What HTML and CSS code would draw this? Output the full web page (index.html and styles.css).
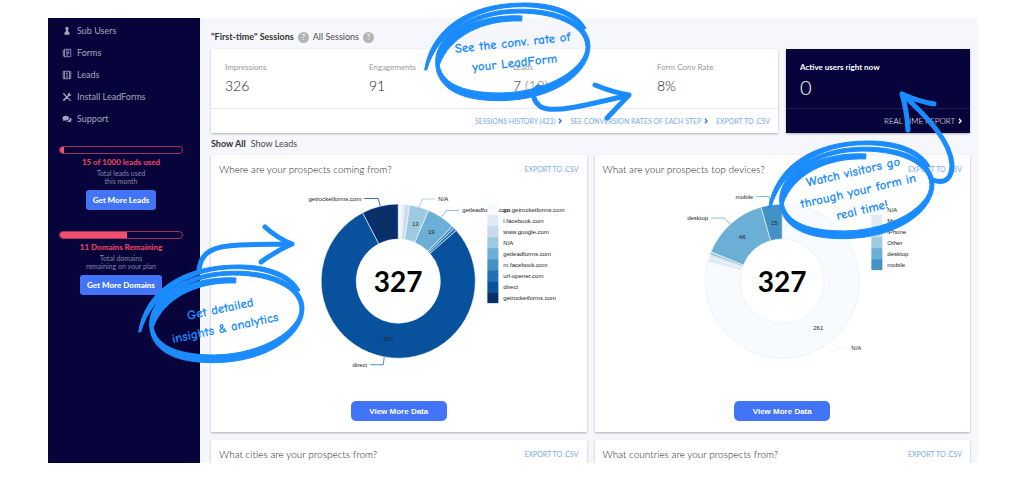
FILE: index.html
```html
<!DOCTYPE html>
<html lang="en">
<head>
<meta charset="utf-8">
<title>LeadForms dashboard</title>
<link rel="stylesheet" href="styles.css">
</head>
<body>
<div class="page">
  <div class="app">
    <aside class="sidebar">
      <nav class="menu">
        <a href="#"><svg viewBox="0 0 12 12"><circle cx="6" cy="3" r="2"/><path d="M4.800 4.500h2.400v1.700c1.500.5 2 1.600 2 4.300H2.800c0-2.700.5-3.800 2-4.300z"/></svg>Sub Users</a>
        <a href="#"><svg class="line" viewBox="0 0 12 12"><path d="M3 1.500h7.500v9H3zM3 3H1.500v6.500L3 10.500M4.700 3.500h4M4.700 5.200h4M4.700 6.900h4M4.700 8.600h2.500"/></svg>Forms</a>
        <a href="#"><svg class="line" viewBox="0 0 12 12"><path d="M1.500 1.500h7.500v9H1.500zM3 1.500v9M10.500 2v8M9 1.500l1.500.5M9 10.500l1.500-.5M4.500 8.500h3"/><circle cx="6" cy="4" r=".7"/><path d="M6 5v3"/></svg>Leads</a>
        <a href="#"><svg viewBox="0 0 12 12"><path d="M1 2.200 2.200 1l2.500 2.500L6 6l3.200 2.500 1.800 1.600-1 1-1.700-1.800L5.500 6.500 3.500 4.700zM8 1.200c1-.5 1.900-.3 1.900-.3L8.700 2.300l1 1 1.400-1.200c.3 2-1.100 3.100-2.600 2.800L3 10.500c-1 1-2.400-.4-1.500-1.500L7.100 3.500C6.900 2.500 7.300 1.600 8 1.200z"/></svg>Install LeadForms</a>
        <a href="#"><svg viewBox="0 0 12 12"><path d="M4.500 2C2.200 2 .5 3.300.5 5c0 1 .5 1.700 1.300 2.200L1 8.700l2.300-.9c3 .4 5.200-1 5.200-2.900C8.500 3.200 6.800 2 4.500 2zM9.300 4.500c.4 2.200-1.500 4-4 4.200 1 .8 2.400 1 3.700.7l2 .8-.6-1.400c1.800-1.400 1.300-3.800-1.100-4.300z"/></svg>Support</a>
      </nav>
      <section class="quota">
        <div class="bar"><span class="fill" style="width:3%"></span></div>
        <strong>15 of 1000 leads used</strong>
        <p>Total leads used<br>this month</p>
        <button type="button">Get More Leads</button>
      </section>
      <section class="quota">
        <div class="bar"><span class="fill" style="width:55%"></span></div>
        <strong>11 Domains Remaining</strong>
        <p>Total domains<br>remaining on your plan</p>
        <button type="button">Get More Domains</button>
      </section>
    </aside>
    <main class="main">
      <div class="tabs sessions">
        <a class="current" href="#">"First-time" Sessions</a><button class="help" type="button">?</button>
        <a href="#">All Sessions</a><button class="help" type="button">?</button>
      </div>
      <div class="summary">
        <section class="card metrics">
          <dl class="figures">
            <div><dt>Impressions</dt><dd>326</dd></div>
            <div><dt>Engagements</dt><dd>91</dd></div>
            <div><dt>Leads</dt><dd>7 <span class="muted">(18)</span></dd></div>
            <div><dt>Form Conv Rate</dt><dd>8%</dd></div>
          </dl>
          <div class="actions">
            <a href="#">SESSIONS HISTORY (423) <svg class="chev" viewBox="0 0 4 6"><path d="M1 .8 3 3 1 5.200"/></svg></a>
            <a href="#">SEE CONVERSION RATES OF EACH STEP <svg class="chev" viewBox="0 0 4 6"><path d="M1 .8 3 3 1 5.200"/></svg></a>
            <a href="#">EXPORT TO .CSV</a>
          </div>
        </section>
        <section class="card live">
          <div class="now"><h2>Active users right now</h2><p>0</p></div>
          <div class="actions"><a href="#">REAL TIME REPORT <svg class="chev" viewBox="0 0 4 6"><path d="M1 .8 3 3 1 5.200"/></svg></a></div>
        </section>
      </div>
      <div class="tabs filter"><a class="current" href="#">Show All</a><a href="#">Show Leads</a></div>
      <div class="charts">
        <section class="card chart">
          <header><h2>Where are your prospects coming from?</h2><a href="#">EXPORT TO .CSV</a></header>
          <svg class="plot" id="sources" viewBox="211 183 375 210"></svg>
          <button class="more" type="button">View More Data</button>
        </section>
        <section class="card chart">
          <header><h2>What are your prospects top devices?</h2><a href="#">EXPORT TO .CSV</a></header>
          <svg class="plot" id="devices" viewBox="594 183 375 210"></svg>
          <button class="more" type="button">View More Data</button>
        </section>
        <section class="card chart"><header><h2>What cities are your prospects from?</h2><a href="#">EXPORT TO .CSV</a></header></section>
        <section class="card chart"><header><h2>What countries are your prospects from?</h2><a href="#">EXPORT TO .CSV</a></header></section>
      </div>
    </main>
  </div>

  <svg class="defs" width="0" height="0" aria-hidden="true">
    <defs>
      <g id="scribble">
        <path class="ink-fill" d="M77 190C74 122 150 50 270 32C400 14 538 50 540 138C540 215 440 300 270 302C150 303 80 265 77 190zM87 190C92 245 150 279 270 279C420 277 530 200 528 140C526 66 400 28 280 42C170 56 84 120 87 190z"/>
        <path class="ink-fill" d="M44 210C62 90 170 10 340 9C440 8 505 40 528 85L520 88C490 48 430 22 340 20C190 18 82 100 50 210z"/>
        <path class="ink-fill" d="M80 186C82 100 210 40 336 48L335 63C215 58 118 112 88 195z"/>
      </g>
    </defs>
  </svg>
  <svg class="note note-rate" viewBox="420 0 220 130">
    <use href="#scribble" transform="translate(410 0) scale(.3333)"/>
    <path class="ink" d="M538 87C531 93 533 101 541 107C553 113 580 107 629 95M595 85Q612 92 629 95L607 118"/>
    <text transform="translate(513 47) rotate(-6)">See the conv. rate of</text>
    <text transform="translate(515 67) rotate(-6)">your LeadForm</text>
  </svg>
  <svg class="note note-insights" viewBox="130 220 180 150">
    <use href="#scribble" transform="translate(124 262) scale(.3333)"/>
    <path class="ink" d="M199 271C200 252 213 246 240 245Q265 244 292 244M265 227Q277 238 292 244Q276 251 261 262"/>
    <text transform="translate(221 313) rotate(-12)">Get detailed</text>
    <text transform="translate(226 332) rotate(-12)">insights &amp; analytics</text>
  </svg>
  <svg class="note note-live" viewBox="760 85 210 160">
    <use href="#scribble" transform="translate(754 138) scale(.3333)"/>
    <path class="ink" d="M933 180C947 185 952 176 952 165C951 143 930 119 902 94M934 104Q917 101 902 94Q907 111 908 130"/>
    <text transform="translate(854 176) rotate(-13)">Watch visitors go</text>
    <text transform="translate(859 195) rotate(-13)">through your form in</text>
    <text transform="translate(863 214) rotate(-13)">real time!</text>
  </svg>
</div>
<script src="charts.js"></script>
</body>
</html>
```
FILE: styles.css
```css
* { box-sizing: border-box; }
body { margin: 0; background: #fff; color: #4a4a4a; font: 9px/12px Lato, sans-serif; }
h2, p, dl, dd { margin: 0; }
a { color: inherit; text-decoration: none; }
button { border: 0; padding: 0; cursor: pointer; font: inherit; }
.page { position: relative; height: 100vh; padding: 18px 46px 22px 48px; }
.app { display: flex; height: 100%; overflow: hidden; background: #f6f7fc; }

.sidebar { flex: none; width: 152px; padding: 2px 17px 0 11px; background: #06043a; color: #a4a4be; }
.menu { margin-bottom: 16px; }
.menu a { display: flex; align-items: center; gap: 5px; height: 22px; padding-left: 3px; }
.menu svg { width: 10px; height: 10px; fill: currentColor; }
.menu .line { fill: none; stroke: currentColor; }
.quota { display: flex; flex-direction: column; align-items: center; margin-bottom: 21px; text-align: center; }
.bar { width: 100%; height: 8px; overflow: hidden; border: 1px solid #a33358; border-radius: 4px; }
.fill { display: block; height: 100%; background: #f0506e; }
.quota strong { margin-top: 2px; color: #e8405f; font-weight: 900; font-size: 8px; }
.quota p { margin: 1px 0 5px; font-size: 7px; line-height: 8px; color: #8785a5; }
.quota button { height: 20px; padding: 0 7px; border-radius: 3px; background: #4274f8; color: #fff; font-size: 8px; font-weight: 900; }

.main { flex: 1; min-width: 0; padding: 0 8px 0 11px; }
.tabs { display: flex; align-items: center; }
.current { font-weight: 700; color: #333; }
.sessions { height: 31px; padding-top: 7px; gap: 4px; }
.help { width: 11px; height: 11px; border-radius: 50%; background: #b4b4b4; color: #fff; font-size: 8px; line-height: 11px; }
.filter { height: 22px; gap: 5px; }
.card { background: #fff; box-shadow: 0 1px 2px rgba(0, 0, 0, .28); }
.summary { display: grid; grid-template-columns: 567fr 184fr; gap: 8px; }
.metrics, .live { display: flex; flex-direction: column; height: 84px; }
.figures { flex: 1; display: grid; grid-template-columns: 144fr 144fr 144fr 121fr; padding: 12px 0 0 14px; }
.figures dt { color: #999; font-size: 8px; }
.figures dd { margin-top: 4px; font-size: 14px; line-height: 18px; font-weight: 300; color: #222; }
.muted { color: #777; }
.actions { display: flex; align-items: center; justify-content: flex-end; gap: 8px; height: 25px; padding: 0 8px; border-top: 1px solid #e9e9ec; color: #78aaea; font-size: 7px; white-space: nowrap; }
.chev { width: 4px; height: 6px; margin-left: 1px; fill: none; stroke: #2f6fd0; stroke-width: 1.300; }
.live { background: #06043a; color: #fff; }
.now { flex: 1; padding: 12px 14px 0; }
.now h2 { font-size: 8px; line-height: 12px; font-weight: 700; }
.now p { margin-top: 4px; font-size: 20px; line-height: 20px; font-weight: 300; }
.live .actions { border-color: #201e4e; color: #fff; font-size: 8px; font-weight: 300; }
.live .chev { stroke: #fff; }

.charts { display: grid; grid-template-columns: 1fr 1fr; gap: 8px; }
.chart { display: flex; flex-direction: column; align-items: center; padding-bottom: 11px; }
.chart header { display: flex; align-items: center; justify-content: space-between; width: 100%; height: 28px; padding: 0 8px; }
.chart h2 { font-size: 10px; font-weight: 300; color: #222; }
.chart header a { color: #78aaea; font-size: 7px; }
.plot { width: 100%; height: auto; }
.plot text { font: 6px "Liberation Sans", Arial, sans-serif; fill: #222; }
.plot .end { text-anchor: end; }
.plot .value { text-anchor: middle; }
.plot .total { font: 700 28px Lato, sans-serif; text-anchor: middle; fill: #000; }
.more { width: 96px; height: 20px; margin-top: 8px; border-radius: 5px; background: #4274f8; color: #fff; font: 700 8px "Liberation Sans", Arial, sans-serif; }

.defs { position: absolute; }
.note { position: absolute; overflow: visible; pointer-events: none; }
.note-rate { left: calc(50% - 92px); top: 0; width: 220px; height: 130px; }
.note-insights { left: 130px; top: 220px; width: 180px; height: 150px; }
.note-live { right: 54px; top: 85px; width: 210px; height: 160px; }
.ink-fill { fill: #1a8cff; stroke: #1a8cff; stroke-width: 3; stroke-linejoin: round; }
.ink { fill: none; stroke: #1a8cff; stroke-width: 5; stroke-linecap: round; stroke-linejoin: round; }
.note text { font: 700 13px "Comic Neue", "Comic Sans MS", Lato, sans-serif; fill: #1a8cff; text-anchor: middle; }
```
FILE: charts.js
```js
const NS = "http://www.w3.org/2000/svg";

function add(svg, tag, attrs, text) {
  const el = document.createElementNS(NS, tag);
  for (const key in attrs) el.setAttribute(key, attrs[key]);
  if (text) el.textContent = text;
  svg.appendChild(el);
}

function ring(svg, cx, cy, slices) {
  const at = (r, deg) => {
    const a = deg * Math.PI / 180;
    return (cx + r * Math.sin(a)).toFixed(2) + " " + (cy - r * Math.cos(a)).toFixed(2);
  };
  for (const [from, to, fill, edge] of slices) {
    const big = to - from > 180 ? 1 : 0;
    add(svg, "path", {
      d: `M${at(77, from)}A77 77 0 ${big} 1 ${at(77, to)}L${at(42, to)}A42 42 0 ${big} 0 ${at(42, from)}Z`,
      fill, stroke: edge || "#fff", "stroke-width": 0.6
    });
  }
  add(svg, "text", { x: cx, y: cy + 11, class: "total" }, "327");
}

function legend(svg, x, y, items) {
  items.forEach(([name, fill], i) => {
    add(svg, "rect", { x, y: y + i * 11, width: 11, height: 11, fill });
    add(svg, "text", { x: x + 16, y: y + i * 11 + 8 }, name);
  });
}

function labels(svg, items) {
  for (const [text, x, y, cls, line, color] of items) {
    add(svg, "text", { x, y, class: cls }, text);
    if (line) add(svg, "path", { d: line, fill: "none", stroke: color, "stroke-width": 0.8 });
  }
}

const sources = document.getElementById("sources");
ring(sources, 398, 281, [
  [0, 2.4, "#f7fbff", "#e6eef7"], [2.4, 4.6, "#deebf7"], [4.6, 8.6, "#c9daee"],
  [8.6, 23.2, "#9ecae1"], [23.2, 44.6, "#6baed6"], [44.6, 46.7, "#4292c6"],
  [46.7, 48.9, "#2171b5"], [48.9, 332.5, "#08519c"], [332.5, 360, "#08306b"]
]);
labels(sources, [
  ["getrocketforms.com", 361, 201, "end", "M364 198.500H378L380 206", "#08519c"],
  ["N/A", 438, 201, "", "M419 207L422 199H435", "#9ecae1"],
  ["getleadforms.com", 462, 212, "", "M441 217L446 210.500H459", "#6baed6"],
  ["direct", 367, 367, "end", "M370 364.500H383L384 357", "#2171b5"],
  ["25", 384, 226, "value"], ["13", 415, 226, "value"],
  ["19", 431, 234, "value"], ["262", 388, 341, "value"]
]);
legend(sources, 487, 204, [
  ["go.getrocketforms.com", "#f7fbff"], ["l.facebook.com", "#deebf7"],
  ["www.google.com", "#c9daee"], ["N/A", "#9ecae1"], ["getleadforms.com", "#6baed6"],
  ["m.facebook.com", "#4292c6"], ["url-opener.com", "#2171b5"],
  ["direct", "#08519c"], ["getrocketforms.com", "#08306b"]
]);

const devices = document.getElementById("devices");
ring(devices, 781, 281, [
  [0, 284.5, "#f7fbff", "#e3ebf4"], [284.5, 288.4, "#deebf7"], [288.4, 290, "#c6dbef"],
  [290, 292.4, "#9ecae1"], [292.4, 344, "#6baed6"], [344, 360, "#4292c6"]
]);
labels(devices, [
  ["mobile", 752, 199, "end", "M755 196.500H768L770 206", "#6baed6"],
  ["desktop", 707, 220, "end", "M710 218H723L729 224", "#6baed6"],
  ["N/A", 850, 350, "", "M830 343L835 348H847", "#eef4fb"],
  ["15", 773, 225, "value"], ["46", 741, 239, "value"], ["261", 817, 330, "value"]
]);
legend(devices, 870, 204, [
  ["N/A", "#f7fbff"], ["Mac", "#deebf7"], ["iPhone", "#c6dbef"],
  ["Other", "#9ecae1"], ["desktop", "#6baed6"], ["mobile", "#4292c6"]
]);
```
